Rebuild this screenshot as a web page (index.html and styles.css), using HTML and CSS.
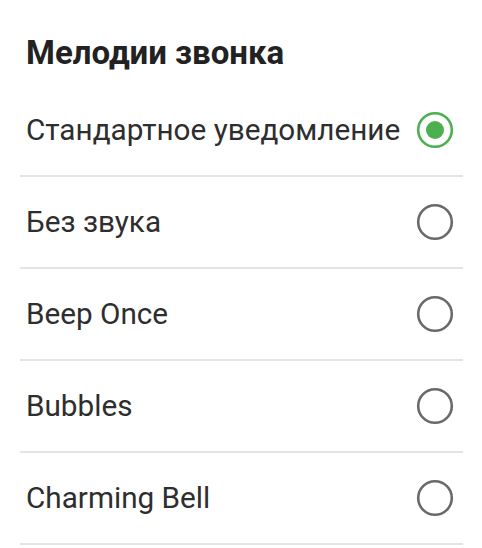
FILE: index.html
```html
<!DOCTYPE html>
<html lang="ru">
<head>
<meta charset="utf-8">
<link rel="stylesheet" href="styles.css">
</head>
<body>
<div class="screen">
  <h1 class="title">Мелодии звонка</h1>
  <ul class="list">
    <li class="row">
      <span class="label">Стандартное уведомление</span>
      <svg class="radio" width="38" height="38" viewBox="0 0 38 38"><circle cx="19" cy="19" r="16.8" fill="none" stroke="#4cb050" stroke-width="2.6"/><circle cx="19" cy="19" r="9" fill="#4cb050"/></svg>
    </li>
    <li class="row">
      <span class="label">Без звука</span>
      <svg class="radio" width="38" height="38" viewBox="0 0 38 38"><circle cx="19" cy="19" r="16.8" fill="none" stroke="#6a6a6a" stroke-width="2.6"/></svg>
    </li>
    <li class="row">
      <span class="label">Beep Once</span>
      <svg class="radio" width="38" height="38" viewBox="0 0 38 38"><circle cx="19" cy="19" r="16.8" fill="none" stroke="#6a6a6a" stroke-width="2.6"/></svg>
    </li>
    <li class="row">
      <span class="label">Bubbles</span>
      <svg class="radio" width="38" height="38" viewBox="0 0 38 38"><circle cx="19" cy="19" r="16.8" fill="none" stroke="#6a6a6a" stroke-width="2.6"/></svg>
    </li>
    <li class="row">
      <span class="label">Charming Bell</span>
      <svg class="radio" width="38" height="38" viewBox="0 0 38 38"><circle cx="19" cy="19" r="16.8" fill="none" stroke="#6a6a6a" stroke-width="2.6"/></svg>
    </li>
  </ul>
</div>
</body>
</html>
```

FILE: styles.css
```css
html, body {
  margin: 0;
  padding: 0;
  background: #ffffff;
}

body {
  font-family: Roboto, "Noto Sans", "DejaVu Sans", sans-serif;
  color: #2b2b2b;
}

.screen {
  padding-top: 33px;
}

.title {
  margin: 0;
  padding-left: 26px;
  font-size: 33px;
  line-height: 40px;
  font-weight: 700;
  color: #222222;
}

.list {
  list-style: none;
  margin: 12px 19px 0 20px;
  padding: 0;
}

.row {
  display: flex;
  align-items: center;
  justify-content: space-between;
  height: 90px;
  padding: 0 9px 0 6px;
  border-bottom: 2px solid #e4e4e4;
}

.label {
  font-size: 29.7px;
  line-height: 36px;
  color: #2e2e2e;
}

.radio {
  display: block;
  flex: none;
}
```
